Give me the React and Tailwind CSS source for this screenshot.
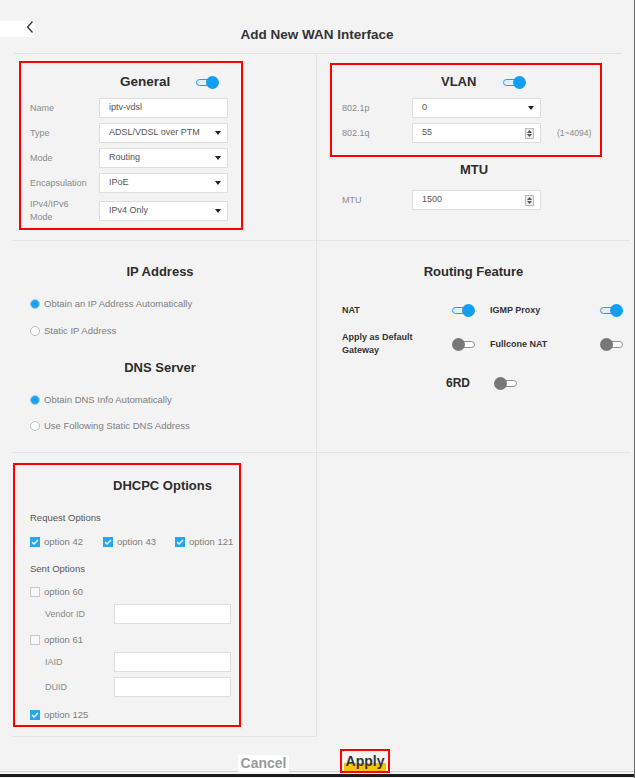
import React from "react";

function Toggle({ on }) {
  return (
    <div className="relative w-[23px] h-[13px] shrink-0">
      <div className={`absolute top-[3px] h-[7px] rounded-full border ${on ? "left-0 w-[18px] bg-[#dff1fd] border-[#1aa0f0]" : "left-[4px] w-[19px] bg-white border-[#8d8d8d]"}`} />
      <div className={`absolute top-0 w-[13px] h-[13px] rounded-full ${on ? "right-0 bg-[#139ff0]" : "left-0 bg-[#777]"}`} />
    </div>
  );
}

function Arrow() {
  return (
    <svg width="6" height="4" viewBox="0 0 6 4"><path d="M0 0h6L3 4z" fill="#222" /></svg>
  );
}

function Spinner() {
  return (
    <div className="w-[9px] h-[11px] border border-[#bbb] bg-[#eee] flex flex-col items-center justify-center gap-[1px]">
      <svg width="5" height="3" viewBox="0 0 5 3"><path d="M0 3h5L2.5 0z" fill="#555" /></svg>
      <svg width="5" height="3" viewBox="0 0 5 3"><path d="M0 0h5L2.5 3z" fill="#555" /></svg>
    </div>
  );
}

function Field({ value, kind, w = "w-[129px]" }) {
  return (
    <div className={`${w} h-[20px] bg-white border border-[#dedede] flex items-center pl-[9px] pr-[6px] text-[9px] text-[#555] shrink-0`}>
      <span className="flex-1">{value}</span>
      {kind === "select" && <Arrow />}
      {kind === "number" && <Spinner />}
    </div>
  );
}

function Row({ label, lw = "w-[69px]", children }) {
  return (
    <div className="flex items-center">
      <div className={`${lw} text-[9px] leading-[13px] text-[#8a8a8a] shrink-0`}>{label}</div>
      {children}
    </div>
  );
}

function Radio({ checked, label }) {
  return (
    <div className="flex items-center h-[14px] pl-[17px]">
      {checked ? (
        <div className="w-[10px] h-[10px] rounded-full bg-[#1ea2ef] border border-[#9fd3f5]" />
      ) : (
        <div className="w-[10px] h-[10px] rounded-full bg-white border border-[#bdbdbd]" />
      )}
      <span className="ml-[4px] text-[9.5px] text-[#7d7d7d]">{label}</span>
    </div>
  );
}

function Check({ checked, label, w }) {
  return (
    <div className={`flex items-center h-[14px] ${w || ""}`}>
      {checked ? (
        <div className="w-[10px] h-[10px] bg-[#27a6f0] flex items-center justify-center">
          <svg width="8" height="6" viewBox="0 0 8 6"><path d="M1 3l2 2 4-4" fill="none" stroke="#fff" strokeWidth="1.3" /></svg>
        </div>
      ) : (
        <div className="w-[10px] h-[10px] bg-[#f7f7f7] border border-[#c9c9c9]" />
      )}
      <span className="ml-[4px] text-[9.5px] text-[#7d7d7d]">{label}</span>
    </div>
  );
}

function Feature({ label, on }) {
  return (
    <div className="flex items-center justify-between">
      <span className="text-[9px] leading-[13px] font-bold text-[#333]">{label}</span>
      <Toggle on={on} />
    </div>
  );
}

export default function App() {
  return (
    <div className="w-[636px] h-[778px] flex bg-white font-['Liberation_Sans',Arial,sans-serif] overflow-hidden">
      <div className="w-[634px] flex flex-col bg-[#f3f3f3]">
        {/* Header */}
        <div className="h-[53px] flex items-start">
          <div className="mt-[21px] w-[35px] h-[16px] bg-white pl-[26px]">
            <svg width="8" height="12" viewBox="0 0 8 12"><path d="M6.5 0.5L1.5 6l5 5.5" fill="none" stroke="#333" strokeWidth="1.3" /></svg>
          </div>
          <div className="flex-1 mr-[35px] pt-[26px] text-center text-[13.5px] leading-[18px] font-bold text-[#333]">Add New WAN Interface</div>
        </div>
        <div className="h-[1px] ml-[14px] w-[608px] bg-[#e2e2e2]" />

        <div className="ml-[13px] w-[617px] grid grid-cols-[304px_313px]">
          {/* General */}
          <div className="h-[187px] border-r border-b border-[#e4e4e4] pt-[7px] pl-[6px]">
            <div className="w-[224px] h-[169px] border-2 border-[#ff0000]">
              <div className="mt-[9px] h-[20px] flex items-center pl-[99px]">
                <span className="text-[13.5px] font-bold text-[#2d2d2d]">General</span>
                <div className="ml-[26px]"><Toggle on /></div>
              </div>
              <div className="mt-[6px] pl-[9px] flex flex-col gap-[5px]">
                <Row label="Name"><Field value="iptv-vdsl" /></Row>
                <Row label="Type"><Field value="ADSL/VDSL over PTM" kind="select" /></Row>
                <Row label="Mode"><Field value="Routing" kind="select" /></Row>
                <Row label="Encapsulation"><Field value="IPoE" kind="select" /></Row>
                <div className="h-[26px] flex items-center">
                  <div className="w-[69px] text-[9px] leading-[13px] text-[#8a8a8a]">IPv4/IPv6<br />Mode</div>
                  <Field value="IPv4 Only" kind="select" />
                </div>
              </div>
            </div>
          </div>

          {/* VLAN + MTU */}
          <div className="h-[187px] border-b border-[#e4e4e4] pt-[9px]">
            <div className="ml-[13px] w-[272px] h-[94px] border-2 border-[#ff0000]">
              <div className="mt-[7px] h-[20px] flex items-center pl-[109px]">
                <span className="text-[13px] font-bold text-[#2d2d2d]">VLAN</span>
                <div className="ml-[27px]"><Toggle on /></div>
              </div>
              <div className="mt-[6px] pl-[10px] flex flex-col gap-[5px]">
                <Row label="802.1p" lw="w-[70px]"><Field value="0" kind="select" /></Row>
                <Row label="802.1q" lw="w-[70px]">
                  <Field value="55" kind="number" />
                  <span className="ml-[16px] text-[8.5px] text-[#8a8a8a]">(1~4094)</span>
                </Row>
              </div>
            </div>
            <div className="mt-[3px] h-[20px] flex items-center pl-[143px] text-[13px] font-bold text-[#2d2d2d]">MTU</div>
            <div className="mt-[10px] pl-[25px]">
              <Row label="MTU" lw="w-[70px]"><Field value="1500" kind="number" /></Row>
            </div>
          </div>

          {/* IP Address / DNS */}
          <div className="h-[212px] border-r border-b border-[#e4e4e4]">
            <div className="mt-[21px] h-[20px] flex items-center justify-center pr-[9px] text-[13px] font-bold text-[#2d2d2d]">IP Address</div>
            <div className="mt-[15px]"><Radio checked label="Obtain an IP Address Automatically" /></div>
            <div className="mt-[13px]"><Radio label="Static IP Address" /></div>
            <div className="mt-[20px] h-[20px] flex items-center justify-center pr-[9px] text-[13px] font-bold text-[#2d2d2d]">DNS Server</div>
            <div className="mt-[15px]"><Radio checked label="Obtain DNS Info Automatically" /></div>
            <div className="mt-[12px]"><Radio label="Use Following Static DNS Address" /></div>
          </div>

          {/* Routing Feature */}
          <div className="h-[212px] border-b border-[#e4e4e4]">
            <div className="mt-[21px] h-[20px] flex items-center justify-center text-[13px] font-bold text-[#2d2d2d]">Routing Feature</div>
            <div className="mt-[18px] pl-[25px] grid grid-cols-[133px_133px] gap-x-[15px]">
              <div className="h-[20px] flex flex-col justify-center"><Feature label="NAT" on /></div>
              <div className="h-[20px] flex flex-col justify-center"><Feature label="IGMP Proxy" on /></div>
              <div className="mt-[11px] h-[26px] flex flex-col justify-center">
                <Feature label={<>Apply as Default<br />Gateway</>} />
              </div>
              <div className="mt-[11px] h-[26px] flex flex-col justify-center"><Feature label="Fullcone NAT" /></div>
            </div>
            <div className="mt-[18px] h-[16px] pl-[129px] flex items-center">
              <span className="text-[12px] font-bold text-[#2d2d2d]">6RD</span>
              <div className="ml-[24px]"><Toggle /></div>
            </div>
          </div>

          {/* DHCPC Options */}
          <div className="h-[284px] border-r border-b border-[#e4e4e4] pt-[10px]">
            <div className="w-[228px] h-[264px] border-2 border-[#ff0000] pl-[15px]">
              <div className="mt-[11px] h-[20px] flex items-center pl-[83px] text-[13px] font-bold text-[#2d2d2d]">DHCPC Options</div>
              <div className="mt-[15px] h-[14px] flex items-center text-[9.5px] text-[#555]">Request Options</div>
              <div className="mt-[10px] flex">
                <Check checked label="option 42" w="w-[73px]" />
                <Check checked label="option 43" w="w-[72px]" />
                <Check checked label="option 121" />
              </div>
              <div className="mt-[13px] h-[14px] flex items-center text-[9.5px] text-[#555]">Sent Options</div>
              <div className="mt-[9px]"><Check label="option 60" /></div>
              <div className="mt-[5px] pl-[15px]">
                <Row label="Vendor ID"><Field value="" w="w-[117px]" /></Row>
              </div>
              <div className="mt-[9px]"><Check label="option 61" /></div>
              <div className="mt-[5px] pl-[15px]">
                <Row label="IAID"><Field value="" w="w-[117px]" /></Row>
              </div>
              <div className="mt-[5px] pl-[15px]">
                <Row label="DUID"><Field value="" w="w-[117px]" /></Row>
              </div>
              <div className="mt-[11px]"><Check checked label="option 125" /></div>
            </div>
          </div>
          <div className="h-[284px]" />
        </div>

        {/* Footer */}
        <div className="h-[35px] border-b border-[#d2d2d2] flex items-start pl-[238px]">
          <div className="mt-[18px] w-[51px] h-[17px] bg-white text-center text-[14px] leading-[17px] font-bold text-[#9a9a9a]">Cancel</div>
          <div className="ml-[51px] mt-[12px] w-[50px] h-[24px] border-2 border-[#ff0000] flex items-stretch px-[2px]">
            <div className="flex-1 text-center text-[14px] leading-[20px] font-bold text-[#333] bg-[linear-gradient(transparent_12px,#f6c400_12px)]">Apply</div>
          </div>
        </div>
        <div className="h-[2px]" />
        <div className="h-[3px] bg-[#1c1c1c]" />
      </div>
      <div className="w-[1px] bg-[#6a6a6a]" />
      <div className="w-[1px] bg-white" />
    </div>
  );
}
